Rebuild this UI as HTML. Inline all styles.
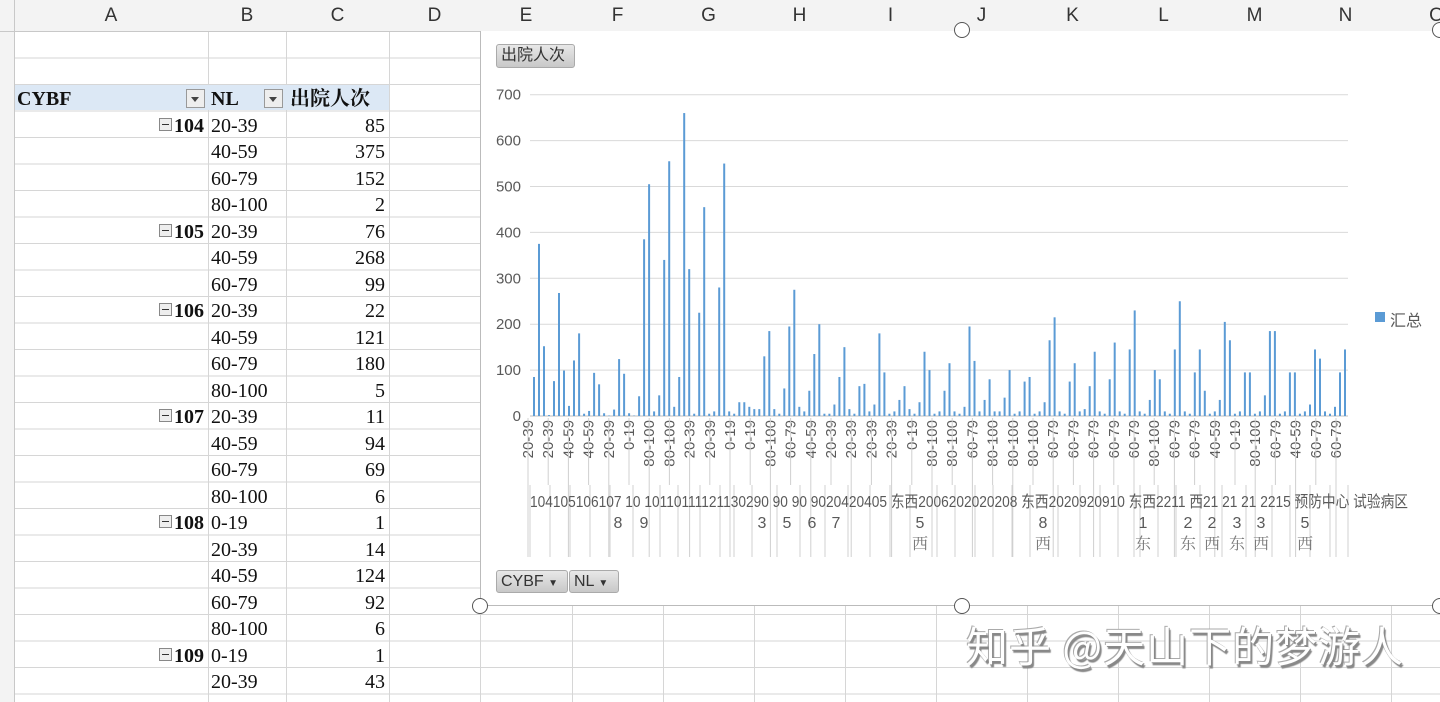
<!DOCTYPE html>
<html><head><meta charset="utf-8"><style>
body{margin:0;width:1440px;height:702px;overflow:hidden;background:#fff;position:relative;font-family:"Liberation Sans","Noto Sans CJK SC",sans-serif}
.abs{position:absolute}
#grid{position:absolute;left:0;top:32px;width:1440px;height:670px;
background-image:repeating-linear-gradient(to bottom,transparent 0,transparent 25.5px,#d6d6d6 25.5px,#d6d6d6 26.5px);}
.vl{position:absolute;top:0;width:1px;height:702px;background:#d6d6d6}
#hdr{position:absolute;left:0;top:0;width:1440px;height:31px;background:#f3f3f3;border-bottom:1px solid #c8c8c8}
.ch{position:absolute;top:0;height:31px;line-height:31px;text-align:center;font-size:19px;color:#333}
.cell{position:absolute;height:26px;line-height:29px;font-family:"Liberation Serif","Noto Serif CJK SC",serif;font-size:20px;color:#111}
.r{text-align:right}
.dd{position:absolute;width:17px;height:17px;border:1px solid #999;background:#eee}
.dd:after{content:"";position:absolute;left:4px;top:7px;border-left:4px solid transparent;border-right:4px solid transparent;border-top:5px solid #444}
.mn{display:inline-block;width:11px;height:11px;border:1px solid #888;background:#eee;position:relative;vertical-align:1px;margin-right:2px}
.mn:after{content:"";position:absolute;left:2px;top:5px;width:7px;height:1px;background:#333}
.btn{position:absolute;background:linear-gradient(#e8e8e8,#c8c8c8);border:1px solid #aaa;border-radius:3px;font-size:16px;color:#333;line-height:22px;padding-left:4px;box-sizing:border-box}
.hd{position:absolute;width:16px;height:16px;border:1.5px solid #555;border-radius:50%;background:#fff;box-sizing:border-box}
</style></head><body>
<div id="grid"></div>
<div class="vl" style="left:14px"></div><div class="vl" style="left:208px"></div><div class="vl" style="left:286px"></div><div class="vl" style="left:389px"></div><div class="vl" style="left:480px"></div><div class="vl" style="left:572px"></div><div class="vl" style="left:663px"></div><div class="vl" style="left:754px"></div><div class="vl" style="left:845px"></div><div class="vl" style="left:936px"></div><div class="vl" style="left:1027px"></div><div class="vl" style="left:1118px"></div><div class="vl" style="left:1209px"></div><div class="vl" style="left:1300px"></div><div class="vl" style="left:1391px"></div>
<div id="hdr">
<div class="ch" style="left:14px;width:194px">A</div><div class="ch" style="left:208px;width:78px">B</div><div class="ch" style="left:286px;width:103px">C</div><div class="ch" style="left:389px;width:91px">D</div><div class="ch" style="left:480px;width:92px">E</div><div class="ch" style="left:572px;width:91px">F</div><div class="ch" style="left:663px;width:91px">G</div><div class="ch" style="left:754px;width:91px">H</div><div class="ch" style="left:845px;width:91px">I</div><div class="ch" style="left:936px;width:91px">J</div><div class="ch" style="left:1027px;width:91px">K</div><div class="ch" style="left:1118px;width:91px">L</div><div class="ch" style="left:1209px;width:91px">M</div><div class="ch" style="left:1300px;width:91px">N</div><div class="ch" style="left:1391px;width:91px">O</div>
<div class="vl" style="left:14px;height:31px;background:#c8c8c8"></div>
</div>
<div class="abs" style="left:0;top:32px;width:14px;height:670px;background:#f3f3f3;border-right:1px solid #c8c8c8"></div>
<div class="abs" style="left:15px;top:85px;width:374px;height:25px;background:#dce8f5"></div>
<div class="cell" style="left:17px;top:85px;font-weight:bold">CYBF</div>
<div class="dd" style="left:186px;top:89px"></div>
<div class="cell" style="left:211px;top:85px;font-weight:bold">NL</div>
<div class="dd" style="left:264px;top:89px"></div>
<div class="cell" style="left:290px;top:85px;font-weight:bold">出院人次</div>
<div id="tbl"></div>

<div class="abs" style="left:480px;top:31px;width:960px;height:575px;background:#fff;border:1px solid #bbb;border-right:none;border-top:none;box-sizing:border-box"></div>
<svg class="abs" style="left:0;top:0" width="1440" height="702" id="sv">
</svg>
<div class="btn" style="left:496px;top:44px;width:79px;height:24px">出院人次</div>
<div class="btn" style="left:496px;top:570px;width:72px;height:23px">CYBF <span style="font-size:10px">▼</span></div>
<div class="btn" style="left:569px;top:570px;width:50px;height:23px">NL <span style="font-size:10px">▼</span></div>
<div class="abs" style="left:1375px;top:312px;width:10px;height:10px;background:#5b9bd5"></div>
<div class="abs" style="left:1390px;top:307px;font-size:16px;color:#595959">汇总</div>
<div class="hd" style="left:954px;top:22px"></div>
<div class="hd" style="left:1432px;top:22px"></div>
<div class="hd" style="left:472px;top:598px"></div>
<div class="hd" style="left:954px;top:598px"></div>
<div class="hd" style="left:1432px;top:598px"></div>
<div class="abs" style="left:966px;top:614px;font-size:42px;color:#fff;text-shadow:2px 3px 1px #888,-1px -1px 0 #aaa,1px 1px 0 #999;font-family:'Noto Sans CJK SC',sans-serif;letter-spacing:1px">知乎 @天山下的梦游人</div>
<script>
var rows=[["104","20-39","85"],["","40-59","375"],["","60-79","152"],["","80-100","2"],["105","20-39","76"],["","40-59","268"],["","60-79","99"],["106","20-39","22"],["","40-59","121"],["","60-79","180"],["","80-100","5"],["107","20-39","11"],["","40-59","94"],["","60-79","69"],["","80-100","6"],["108","0-19","1"],["","20-39","14"],["","40-59","124"],["","60-79","92"],["","80-100","6"],["109","0-19","1"],["","20-39","43"]];
var h="";rows.forEach(function(r,i){var y=111.5+i*26.5;
if(r[0])h+='<div class="cell r" style="left:15px;width:189px;top:'+y+'px;font-weight:bold"><span class="mn"></span>'+r[0]+'</div>';
h+='<div class="cell" style="left:211px;top:'+y+'px">'+r[1]+'</div><div class="cell r" style="left:286px;width:99px;top:'+y+'px">'+r[2]+'</div>';});
document.getElementById('tbl').innerHTML=h;
var v=[85,375,152,2,76,268,99,22,121,180,5,11,94,69,6,1,14,124,92,6,1,43,385,505,10,45,340,555,20,85,660,320,5,225,455,5,10,280,550,10,5,30,30,20,15,15,130,185,15,5,60,195,275,20,10,55,135,200,5,5,25,85,150,15,5,65,70,10,25,180,95,5,10,35,65,15,5,30,140,100,5,10,55,115,10,5,20,195,120,10,35,80,10,10,40,100,5,10,75,85,5,10,30,165,215,10,5,75,115,10,15,65,140,10,5,80,160,10,5,145,230,10,5,35,100,80,10,5,145,250,10,5,95,145,55,5,10,35,205,165,5,10,95,95,5,10,45,185,185,5,10,95,95,5,10,25,145,125,10,5,20,95,145];
var s="",x0=532,w=816,n=v.length,st=w/n;
for(var k=0;k<=7;k++){var y=416-k*45.9;s+='<line x1="530" x2="1348" y1="'+y+'" y2="'+y+'" stroke="'+(k?"#d9d9d9":"#bfbfbf")+'"/>';s+='<text x="521" y="'+(y+5)+'" text-anchor="end" font-size="15" fill="#595959">'+(k*100)+'</text>';}
v.forEach(function(a,i){var bh=a*0.459;s+='<rect x="'+(x0+i*st+1).toFixed(1)+'" y="'+(416-bh)+'" width="2" height="'+bh+'" fill="#5b9bd5"/>';});
var L="20-39,20-39,40-59,40-59,20-39,0-19,80-100,80-100,20-39,20-39,0-19,0-19,80-100,60-79,40-59,20-39,20-39,20-39,20-39,0-19,80-100,80-100,60-79,80-100,80-100,80-100,60-79,60-79,60-79,60-79,60-79,80-100,60-79,60-79,40-59,0-19,80-100,60-79,40-59,60-79,60-79".split(",");
L.forEach(function(t,i){var x=533+i*20.2;s+='<text transform="translate('+x+',420) rotate(-90)" text-anchor="end" font-size="15" fill="#595959">'+t+'</text>';s+='<line x1="'+(x-5)+'" x2="'+(x-5)+'" y1="418" y2="'+(i%2?485:557)+'" stroke="#d0d0d0"/>';});
var g=[530,550,570,590,610,633,660,678,700,720,734,752,777,800,825,848,870,890,910,937,955,975,993,1012,1030,1058,1080,1100,1118,1140,1158,1176,1200,1222,1246,1272,1290,1310,1330,1348];
g.forEach(function(x){s+='<line x1="'+x+'" x2="'+x+'" y1="485" y2="557" stroke="#d0d0d0"/>';});
s+='<text x="530" y="507" font-size="16" fill="#595959" font-family="Liberation Sans,Noto Sans CJK SC,sans-serif" textLength="878" lengthAdjust="spacingAndGlyphs">104105106107 10  10110111121130290  90  90  9020420405 东西2006202020208 东西2020920910 东西2211 西21  21  21  2215 预防中心 试验病区</text>';
[[618,"8"],[644,"9"],[762,"3"],[787,"5"],[812,"6"],[836,"7"],[920,"5"],[1043,"8"],[1143,"1"],[1188,"2"],[1212,"2"],[1237,"3"],[1261,"3"],[1305,"5"]].forEach(function(p){s+='<text x="'+p[0]+'" y="528" text-anchor="middle" font-size="16" fill="#595959">'+p[1]+'</text>';});
[[920,"西"],[1043,"西"],[1143,"东"],[1188,"东"],[1212,"西"],[1237,"东"],[1261,"西"],[1305,"西"]].forEach(function(p){s+='<text x="'+p[0]+'" y="549" text-anchor="middle" font-size="16" fill="#777" font-family="Noto Serif CJK SC,serif">'+p[1]+'</text>';});
document.getElementById('sv').innerHTML=s;
</script>
</body></html>
